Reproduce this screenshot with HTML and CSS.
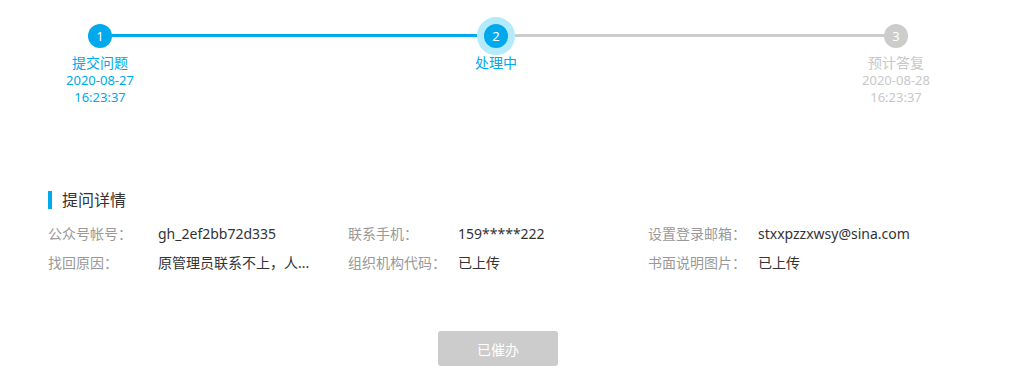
FILE: index.html
```html
<!DOCTYPE html>
<html lang="zh-CN">
<head>
<meta charset="utf-8">
<title>提问详情</title>
<link rel="stylesheet" href="styles.css">
</head>
<body>
<div class="page">
  <div class="steps">
    <div class="step done">
      <div class="node"><span class="dot">1</span></div>
      <div class="label">
        <div class="title">提交问题</div>
        <div class="time">2020-08-27</div>
        <div class="time">16:23:37</div>
      </div>
    </div>
    <div class="bar done"></div>
    <div class="step current">
      <div class="node"><span class="dot">2</span></div>
      <div class="label">
        <div class="title">处理中</div>
      </div>
    </div>
    <div class="bar"></div>
    <div class="step todo">
      <div class="node"><span class="dot">3</span></div>
      <div class="label">
        <div class="title">预计答复</div>
        <div class="time">2020-08-28</div>
        <div class="time">16:23:37</div>
      </div>
    </div>
  </div>

  <div class="details">
    <h2 class="section-title">提问详情</h2>
    <div class="info-grid">
      <div class="field"><span class="key">公众号帐号：</span><span class="val">gh_2ef2bb72d335</span></div>
      <div class="field"><span class="key">联系手机：</span><span class="val">159*****222</span></div>
      <div class="field"><span class="key">设置登录邮箱：</span><span class="val">stxxpzzxwsy@sina.com</span></div>
      <div class="field"><span class="key">找回原因：</span><span class="val">原管理员联系不上，人...</span></div>
      <div class="field"><span class="key">组织机构代码：</span><span class="val">已上传</span></div>
      <div class="field"><span class="key">书面说明图片：</span><span class="val">已上传</span></div>
    </div>
  </div>

  <div class="actions">
    <button class="btn-disabled" type="button" disabled>已催办</button>
  </div>
</div>
</body>
</html>
```

FILE: styles.css
```css
html, body {
  margin: 0;
  padding: 0;
  background: #fff;
}

body {
  font-family: "Noto Sans", "Noto Sans CJK SC", sans-serif;
  color: #333;
}

.page {
  width: 1018px;
}

/* ---------- steps ---------- */
.steps {
  display: flex;
  align-items: flex-start;
  padding: 17px 110px 0 88px;
}

.step {
  display: flex;
  flex-direction: column;
  align-items: center;
}

.step.done,
.step.todo {
  width: 24px;
}

.step.current {
  width: 38px;
}

.node {
  height: 38px;
  display: flex;
  align-items: center;
  justify-content: center;
}

.dot {
  width: 24px;
  height: 24px;
  border-radius: 50%;
  display: flex;
  align-items: center;
  justify-content: center;
  font-size: 13px;
  line-height: 1;
  color: #fff;
  background: #00a9ec;
}

.step.current .dot {
  border: 7px solid #b3ebfc;
}

.step.todo .dot {
  background: #cccccc;
}

.label {
  white-space: nowrap;
  text-align: center;
  color: #00a9ec;
  margin-top: -1px;
}

.step.todo .label {
  color: #c8c8c8;
}

.title {
  font-size: 14px;
  line-height: 18px;
}

.time {
  font-size: 13px;
  line-height: 17px;
}

.bar {
  height: 3px;
  margin-top: 17px;
  background: #cccccc;
}

.bar.done {
  flex: 365;
  background: #00a9ec;
}

.bar:not(.done) {
  flex: 369;
}

/* ---------- details ---------- */
.details {
  margin-top: 85px;
  padding-left: 48px;
}

.section-title {
  margin: 0;
  display: flex;
  align-items: center;
  gap: 10px;
  font-size: 16px;
  font-weight: normal;
  line-height: 18px;
  color: #333;
}

.section-title::before {
  content: "";
  width: 4px;
  height: 18px;
  background: #00a9ec;
}

.info-grid {
  margin-top: 10px;
  display: grid;
  grid-template-columns: 300px 300px 300px;
}

.field {
  display: flex;
  font-size: 14px;
  line-height: 29px;
  white-space: nowrap;
}

.key {
  width: 110px;
  flex: none;
  color: #999;
}

.val {
  color: #333;
}

/* ---------- actions ---------- */
.actions {
  display: flex;
  justify-content: center;
  padding-right: 22px;
  margin-top: 54px;
}

.btn-disabled {
  width: 120px;
  height: 35px;
  border: none;
  border-radius: 3px;
  background: #cccccc;
  color: #fff;
  font-family: "Noto Sans", "Noto Sans CJK SC", sans-serif;
  font-size: 14px;
  cursor: default;
}
```
